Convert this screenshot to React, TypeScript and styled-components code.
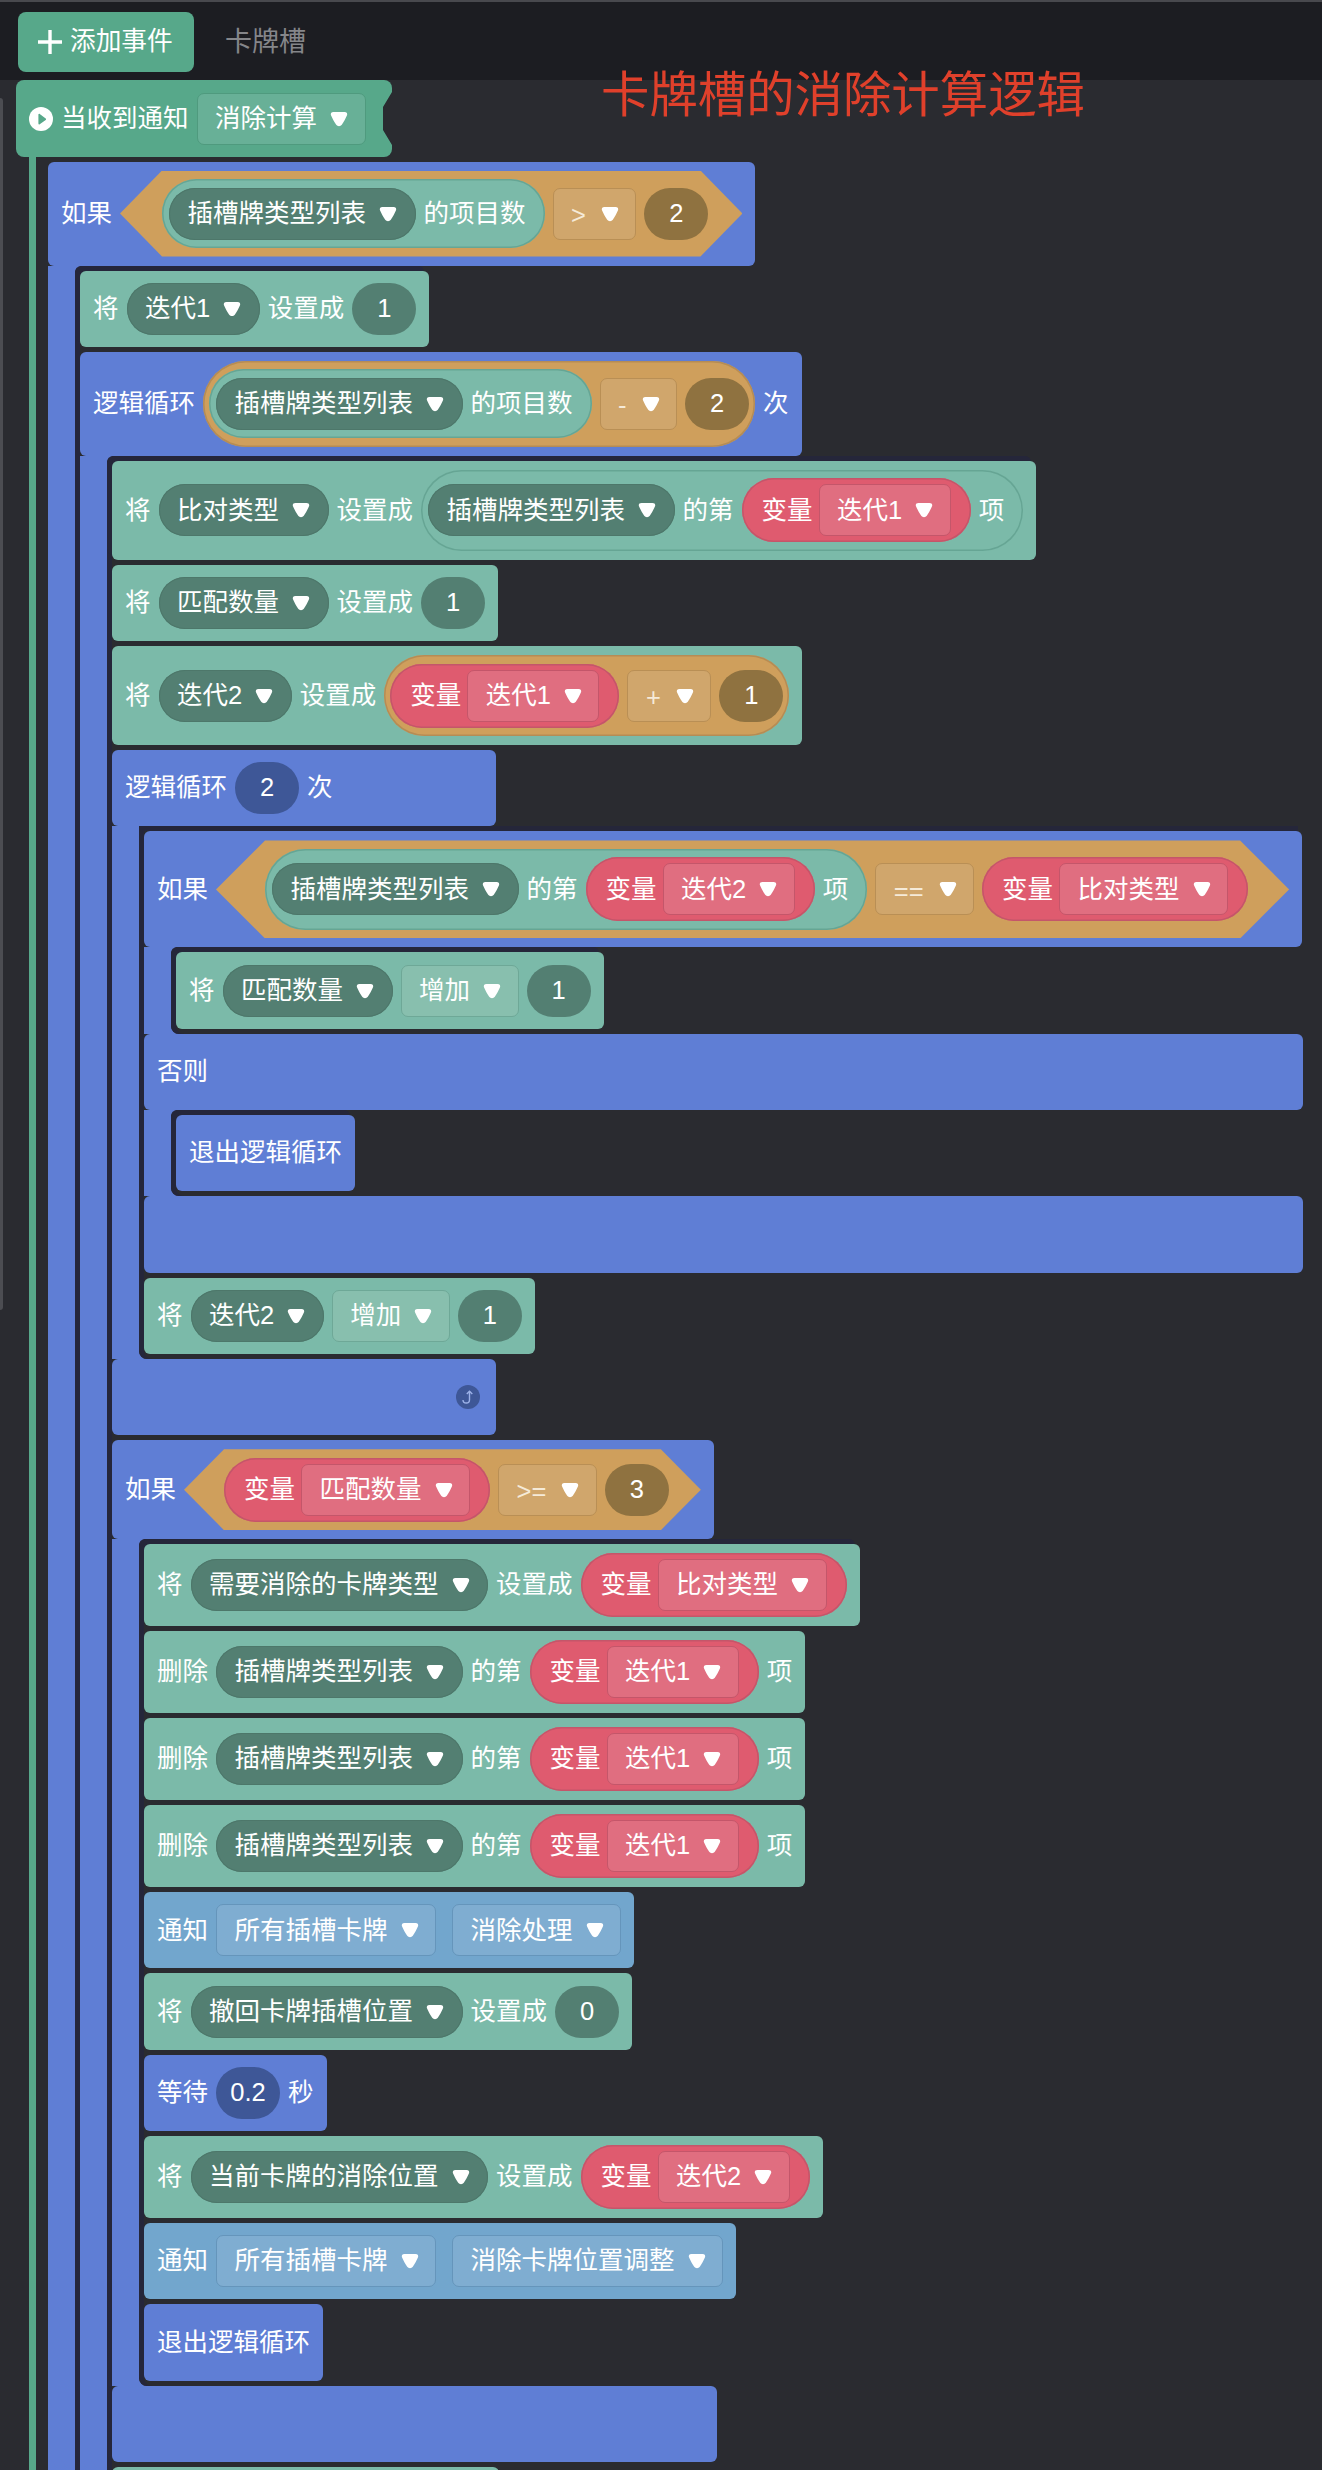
import React from 'react';
import styled, { createGlobalStyle } from 'styled-components';

const GlobalStyle = createGlobalStyle`
  html, body {
    margin: 0;
    padding: 0;
    background: #2a2b30;
    overflow: hidden;
  }
  body {
    font-family: 'Liberation Sans', 'Noto Sans CJK SC', sans-serif;
  }
`;

const tones = {
  hat: { bg: '#57a88a', field: '#68b097', line: '#4f9a7e' },
  data: { bg: '#7bbaa9', field: '#88bfae', line: '#6ea897' },
  flow: { bg: '#5f7ed5', field: '#3e5797', line: '#3e5797' },
  notify: { bg: '#72a6cd', field: '#7fadd1', line: '#6595bb' },
  op: { bg: '#cf9f5c', field: '#d0a66c', line: '#b98f55' },
  vari: { bg: '#df5b6f', field: '#e06e80', line: '#c4566a' },
};

type Tone = keyof typeof tones;

const Page = styled.div`
  position: relative;
  width: 1322px;
  height: 2470px;
  overflow: hidden;
  background: #2a2b30;
  color: #fff;
  font-size: 25.5px;
  line-height: 1;
`;

const TopBar = styled.div`
  display: flex;
  align-items: center;
  box-sizing: border-box;
  height: 80px;
  padding: 2px 0 0 18px;
  gap: 31px;
  background: #1c1d22;
  border-top: 2px solid #48494e;
`;

const AddButton = styled.div`
  display: flex;
  align-items: center;
  gap: 8px;
  box-sizing: border-box;
  width: 176px;
  height: 60px;
  padding-left: 20px;
  border-radius: 8px;
  background: #57a88a;
  font-size: 25.7px;
`;

const TabLabel = styled.div`
  font-size: 27px;
  color: #85868a;
`;

const Title = styled.div`
  position: absolute;
  left: 601px;
  top: 71px;
  font-size: 48.4px;
  line-height: 1;
  color: #e0402b;
  white-space: nowrap;
`;

const EdgeStrip = styled.div`
  position: absolute;
  left: 0;
  top: 98px;
  width: 3px;
  height: 1212px;
  background: #4c4d52;
  border-radius: 0 3px 3px 0;
`;

const Workspace = styled.div`
  padding-left: 16px;
`;

const HatRow = styled.div`
  display: flex;
  align-items: center;
  gap: 8px;
  box-sizing: border-box;
  width: 376px;
  height: 77px;
  padding-left: 13px;
  border-radius: 8px;
  background: #57a88a;
  clip-path: polygon(
    0 0, 100% 0, 100% 12px, calc(100% - 9px) 27px, calc(100% - 9px) 50px,
    100% 65px, 100% 100%, 0 100%
  );
`;

const HatBody = styled.div`
  margin-left: 13px;
  padding: 4.5px 0 0 12px;
  border-left: 7px solid #57a88a;
`;

const Stack = styled.div`
  display: flex;
  flex-direction: column;
  align-items: flex-start;
  gap: 5px;

  /* the navy edge along the top of a slot stops with its first block */
  & > :first-child {
    box-shadow: -5px -5px 0 0 #25263a;
  }
`;

const Row = styled.div<{ $tone: Tone; $minWidth?: number }>`
  display: flex;
  align-items: center;
  gap: 8px;
  box-sizing: border-box;
  width: fit-content;
  min-width: ${(p) => p.$minWidth ?? 0}px;
  min-height: 76.3px;
  padding: 9px 13px;
  border-radius: 6px;
  white-space: nowrap;
  background: ${(p) => tones[p.$tone].bg};
`;

const Band = styled.div<{ $width: number }>`
  display: flex;
  align-items: center;
  justify-content: flex-end;
  box-sizing: border-box;
  width: ${(p) => p.$width}px;
  height: 76.3px;
  padding: 0 13px;
  border-radius: 6px;
  background: #5f7ed5;
`;

const ElseBand = styled(Band)`
  justify-content: flex-start;
`;

const Blank = styled.div<{ $width: number }>`
  width: ${(p) => p.$width}px;
  height: 76px;
  border-radius: 6px;
  background: #7bbaa9;
`;

const CBlock = styled.div`
  display: flex;
  flex-direction: column;
  align-items: flex-start;
`;

/* blue arm on the left, with the slot's rounded corner cut into it */
const Arm = styled.div`
  padding-left: 27px;
  background: linear-gradient(to right, #5f7ed5 35px, transparent 35px);
`;

const Slot = styled.div`
  padding: 5px 0 5px 5px;
  border-radius: 8px 0 0 8px;
  background: #2a2b30;
  box-shadow: inset 5px 0 0 #25263a;
  width: fit-content;
`;

const Label = styled.span`
  display: inline-block;
`;

const Pill = styled.div`
  display: flex;
  align-items: center;
  gap: 13px;
  box-sizing: border-box;
  height: 52px;
  padding: 0 18.5px;
  border-radius: 26px;
  background: #537f72;
  box-shadow: inset 0 0 0 1px #4d776a;
`;

const Field = styled.div<{ $tone: Tone }>`
  display: flex;
  align-items: center;
  gap: 13px;
  box-sizing: border-box;
  height: 52px;
  padding: 0 16.5px 0 17.5px;
  border-radius: 7px;
  background: ${(p) => tones[p.$tone].field};
  border: 1.5px solid ${(p) => tones[p.$tone].line};
`;

const FieldPair = styled.div`
  display: flex;
  gap: 16px;
`;

const OpSign = styled.span`
  color: #f5ead8;
  padding-top: 4px;
  margin-right: 2px;
`;

const Num = styled.div<{ $dark: string }>`
  display: flex;
  align-items: center;
  justify-content: center;
  box-sizing: border-box;
  min-width: 64px;
  height: 52px;
  padding: 0 13px;
  border-radius: 26px;
  background: ${(p) => p.$dark};
`;

const ListExpr = styled.div`
  display: flex;
  align-items: center;
  gap: 8px;
  padding: 8.5px 19px 8.5px 7px;
  border-radius: 42px;
  background: #7bbaa9;
  box-shadow: inset 0 0 0 1.5px #66a594;
`;

const VarExpr = styled.div`
  display: flex;
  align-items: center;
  gap: 6px;
  height: 64px;
  box-sizing: border-box;
  padding: 0 20px;
  border-radius: 32px;
  background: #df5b6f;
  box-shadow: inset 0 0 0 1.5px #c4566a;
`;

const RoundExpr = styled.div`
  display: flex;
  align-items: center;
  gap: 8px;
  padding: 8.5px 6px;
  border-radius: 46px;
  background: #cf9f5c;
  box-shadow: inset 0 0 0 1.5px #b58c55;
`;

const HexExpr = styled.div<{ $slant: number }>`
  display: flex;
  align-items: center;
  gap: 8px;
  padding: 8.5px ${(p) => p.$slant - 8}px 8.5px ${(p) => p.$slant}px;
  background: #cf9f5c;
  clip-path: polygon(
    ${(p) => p.$slant}px 0, calc(100% - ${(p) => p.$slant}px) 0, 100% 50%,
    calc(100% - ${(p) => p.$slant}px) 100%, ${(p) => p.$slant}px 100%, 0 50%
  );
`;

const BackBadge = styled.div`
  display: flex;
  align-items: center;
  justify-content: center;
  width: 24px;
  height: 24px;
  margin-right: 3px;
  border-radius: 50%;
  background: #3e5797;
`;

const Caret = () => (
  <svg width="18" height="16" viewBox="0 0 18 16">
    <path d="M3.500 1h11c2.300 0 3.300 1.600 2.400 3.500-1.300 3-3.100 6.300-5.100 9.200-1.300 1.900-4.300 1.900-5.600 0-2-2.900-3.800-6.200-5.100-9.200C.2 2.600 1.200 1 3.500 1z" fill="#fff" />
  </svg>
);

const PlayIcon = () => (
  <svg width="24" height="24" viewBox="0 0 24 24">
    <circle cx="12" cy="12" r="12" fill="#fff" />
    <path d="M9.400 7.500v9c0 .8.7 1.100 1.300.7l6-4.300c.5-.4.5-1.100 0-1.500l-6-4.500c-.6-.4-1.300 0-1.300.6z" fill="#57a88a" />
  </svg>
);

const PlusIcon = () => (
  <svg width="24" height="24" viewBox="0 0 24 24">
    <path d="M12 0v24M0 12h24" stroke="#fff" strokeWidth="3.400" />
  </svg>
);

const BackIcon = () => (
  <svg width="16" height="16" viewBox="0 0 16 16" fill="none" stroke="#9db2e8" strokeWidth="1.400">
    <path d="M9.500 2.500v8.200c0 2-1.300 3.300-3.200 3.300S3 12.800 3 11" />
    <path d="M6.800 5l2.700-2.800L12.300 5" />
  </svg>
);

const Dark = ({ text }: { text: string }) => (
  <Pill>
    <Label>{text}</Label>
    <Caret />
  </Pill>
);

const Drop = ({ text, tone }: { text: string; tone: Tone }) => (
  <Field $tone={tone}>
    <Label>{text}</Label>
    <Caret />
  </Field>
);

const Op = ({ sign }: { sign: string }) => (
  <Field $tone="op">
    <OpSign>{sign}</OpSign>
    <Caret />
  </Field>
);

const Var = ({ name }: { name: string }) => (
  <VarExpr>
    <Label>变量</Label>
    <Drop text={name} tone="vari" />
  </VarExpr>
);

const SLOT_LIST = '插槽牌类型列表';

const ListCount = () => (
  <ListExpr>
    <Dark text={SLOT_LIST} />
    <Label>的项目数</Label>
  </ListExpr>
);

const ListItem = ({ name }: { name: string }) => (
  <ListExpr>
    <Dark text={SLOT_LIST} />
    <Label>的第</Label>
    <Var name={name} />
    <Label>项</Label>
  </ListExpr>
);

const SetTo = ({ name, children }: { name: string; children: React.ReactNode }) => (
  <Row $tone="data">
    <Label>将</Label>
    <Dark text={name} />
    <Label>设置成</Label>
    {children}
  </Row>
);

const Increase = ({ name }: { name: string }) => (
  <Row $tone="data">
    <Label>将</Label>
    <Dark text={name} />
    <Drop text="增加" tone="data" />
    <Num $dark="#537f72">1</Num>
  </Row>
);

const DeleteRow = () => (
  <Row $tone="data">
    <Label>删除</Label>
    <Dark text={SLOT_LIST} />
    <Label>的第</Label>
    <Var name="迭代1" />
    <Label>项</Label>
  </Row>
);

const Notify = ({ target, message }: { target: string; message: string }) => (
  <Row $tone="notify">
    <Label>通知</Label>
    <FieldPair>
      <Drop text={target} tone="notify" />
      <Drop text={message} tone="notify" />
    </FieldPair>
  </Row>
);

const Branch = ({
  head,
  foot,
  children,
}: {
  head: React.ReactNode;
  foot?: React.ReactNode;
  children: React.ReactNode;
}) => (
  <CBlock>
    {head}
    <Arm>
      <Slot>
        <Stack>{children}</Stack>
      </Slot>
    </Arm>
    {foot}
  </CBlock>
);

const App = () => {
  return (
    <Page>
      <GlobalStyle />
      <TopBar>
        <AddButton>
          <PlusIcon />
          添加事件
        </AddButton>
        <TabLabel>卡牌槽</TabLabel>
      </TopBar>
      <Title>卡牌槽的消除计算逻辑</Title>
      <EdgeStrip />
      <Workspace>
        <HatRow>
          <PlayIcon />
          <Label>当收到通知</Label>
          <Drop text="消除计算" tone="hat" />
        </HatRow>
        <HatBody>
          <Branch
            head={
              <Row $tone="flow">
                <Label>如果</Label>
                <HexExpr $slant={42}>
                  <ListCount />
                  <Op sign=">" />
                  <Num $dark="#8f7240">2</Num>
                </HexExpr>
              </Row>
            }
          >
            <SetTo name="迭代1">
              <Num $dark="#537f72">1</Num>
            </SetTo>
            <Branch
              head={
                <Row $tone="flow">
                  <Label>逻辑循环</Label>
                  <RoundExpr>
                    <ListCount />
                    <Op sign="-" />
                    <Num $dark="#8f7240">2</Num>
                  </RoundExpr>
                  <Label>次</Label>
                </Row>
              }
            >
              <SetTo name="比对类型">
                <ListItem name="迭代1" />
              </SetTo>
              <SetTo name="匹配数量">
                <Num $dark="#537f72">1</Num>
              </SetTo>
              <SetTo name="迭代2">
                <RoundExpr>
                  <Var name="迭代1" />
                  <Op sign="+" />
                  <Num $dark="#8f7240">1</Num>
                </RoundExpr>
              </SetTo>
              <Branch
                head={
                  <Row $tone="flow" $minWidth={384}>
                    <Label>逻辑循环</Label>
                    <Num $dark="#3e5797">2</Num>
                    <Label>次</Label>
                  </Row>
                }
                foot={
                  <Band $width={384}>
                    <BackBadge>
                      <BackIcon />
                    </BackBadge>
                  </Band>
                }
              >
                <CBlock>
                  <Branch
                    head={
                      <Row $tone="flow">
                        <Label>如果</Label>
                        <HexExpr $slant={49}>
                          <ListItem name="迭代2" />
                          <Op sign="==" />
                          <Var name="比对类型" />
                        </HexExpr>
                      </Row>
                    }
                  >
                    <Increase name="匹配数量" />
                  </Branch>
                  <Branch
                    head={<ElseBand $width={1159}>否则</ElseBand>}
                    foot={<Band $width={1159} />}
                  >
                    <Row $tone="flow">退出逻辑循环</Row>
                  </Branch>
                </CBlock>
                <Increase name="迭代2" />
              </Branch>
              <Branch
                head={
                  <Row $tone="flow">
                    <Label>如果</Label>
                    <HexExpr $slant={40}>
                      <Var name="匹配数量" />
                      <Op sign=">=" />
                      <Num $dark="#8f7240">3</Num>
                    </HexExpr>
                  </Row>
                }
                foot={<Band $width={605} />}
              >
                <SetTo name="需要消除的卡牌类型">
                  <Var name="比对类型" />
                </SetTo>
                <DeleteRow />
                <DeleteRow />
                <DeleteRow />
                <Notify target="所有插槽卡牌" message="消除处理" />
                <SetTo name="撤回卡牌插槽位置">
                  <Num $dark="#537f72">0</Num>
                </SetTo>
                <Row $tone="flow">
                  <Label>等待</Label>
                  <Num $dark="#3e5797">0.2</Num>
                  <Label>秒</Label>
                </Row>
                <SetTo name="当前卡牌的消除位置">
                  <Var name="迭代2" />
                </SetTo>
                <Notify target="所有插槽卡牌" message="消除卡牌位置调整" />
                <Row $tone="flow">退出逻辑循环</Row>
              </Branch>
              <Blank $width={387} />
            </Branch>
          </Branch>
        </HatBody>
      </Workspace>
    </Page>
  );
};

export default App;
